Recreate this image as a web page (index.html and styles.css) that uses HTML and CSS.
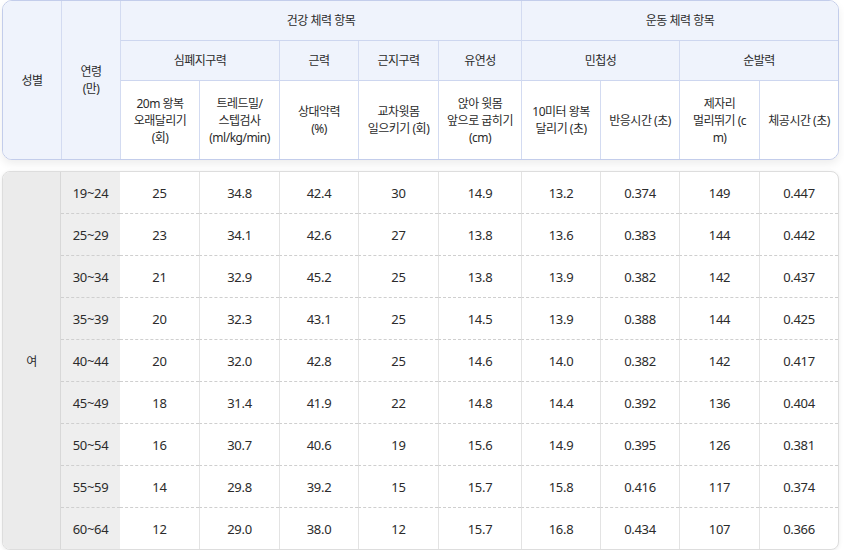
FILE: index.html
```html
<!DOCTYPE html>
<html lang="ko">
<head>
<meta charset="utf-8">
<title>체력 기준표</title>
<link rel="stylesheet" href="styles.css">
</head>
<body>
<div class="wrap">
  <div class="head-box">
    <table class="grid head">
      <colgroup>
        <col class="c1"><col class="c2"><col class="c3"><col class="c4"><col class="c5"><col class="c6"><col class="c7"><col class="c8"><col class="c9"><col class="c10"><col class="c11">
      </colgroup>
      <tr class="r1">
        <th rowspan="3" class="side first">성별</th>
        <th rowspan="3" class="side">연령<br>(만)</th>
        <th colspan="5">건강 체력 항목</th>
        <th colspan="4">운동 체력 항목</th>
      </tr>
      <tr class="r2">
        <th colspan="2">심폐지구력</th>
        <th>근력</th>
        <th>근지구력</th>
        <th>유연성</th>
        <th colspan="2">민첩성</th>
        <th colspan="2">순발력</th>
      </tr>
      <tr class="r3">
        <th>20m 왕복<br>오래달리기<br>(회)</th>
        <th>트레드밀/<br>스텝검사<br>(ml/kg/min)</th>
        <th>상대악력<br>(%)</th>
        <th>교차윗몸<br>일으키기 (회)</th>
        <th>앉아 윗몸<br>앞으로 굽히기<br>(cm)</th>
        <th>10미터 왕복<br>달리기 (초)</th>
        <th>반응시간 (초)</th>
        <th>제자리<br>멀리뛰기 (c<br>m)</th>
        <th>체공시간 (초)</th>
      </tr>
    </table>
  </div>
  <div class="body-box">
    <table class="grid data">
      <colgroup>
        <col class="c1"><col class="c2"><col class="c3"><col class="c4"><col class="c5"><col class="c6"><col class="c7"><col class="c8"><col class="c9"><col class="c10"><col class="c11">
      </colgroup>
      <tr><td rowspan="9" class="sex">여</td><td class="age">19~24</td><td class="d0">25</td><td>34.8</td><td>42.4</td><td>30</td><td>14.9</td><td>13.2</td><td>0.374</td><td>149</td><td>0.447</td></tr>
      <tr><td class="age">25~29</td><td class="d0">23</td><td>34.1</td><td>42.6</td><td>27</td><td>13.8</td><td>13.6</td><td>0.383</td><td>144</td><td>0.442</td></tr>
      <tr><td class="age">30~34</td><td class="d0">21</td><td>32.9</td><td>45.2</td><td>25</td><td>13.8</td><td>13.9</td><td>0.382</td><td>142</td><td>0.437</td></tr>
      <tr><td class="age">35~39</td><td class="d0">20</td><td>32.3</td><td>43.1</td><td>25</td><td>14.5</td><td>13.9</td><td>0.388</td><td>144</td><td>0.425</td></tr>
      <tr><td class="age">40~44</td><td class="d0">20</td><td>32.0</td><td>42.8</td><td>25</td><td>14.6</td><td>14.0</td><td>0.382</td><td>142</td><td>0.417</td></tr>
      <tr><td class="age">45~49</td><td class="d0">18</td><td>31.4</td><td>41.9</td><td>22</td><td>14.8</td><td>14.4</td><td>0.392</td><td>136</td><td>0.404</td></tr>
      <tr><td class="age">50~54</td><td class="d0">16</td><td>30.7</td><td>40.6</td><td>19</td><td>15.6</td><td>14.9</td><td>0.395</td><td>126</td><td>0.381</td></tr>
      <tr><td class="age">55~59</td><td class="d0">14</td><td>29.8</td><td>39.2</td><td>15</td><td>15.7</td><td>15.8</td><td>0.416</td><td>117</td><td>0.374</td></tr>
      <tr class="last"><td class="age">60~64</td><td class="d0">12</td><td>29.0</td><td>38.0</td><td>12</td><td>15.7</td><td>16.8</td><td>0.434</td><td>107</td><td>0.366</td></tr>
    </table>
  </div>
</div>
</body>
</html>
```

FILE: styles.css
```css
* { box-sizing: border-box; }
html, body { margin: 0; padding: 0; background: #ffffff; }
body {
  font-family: "Noto Sans", "Noto Sans CJK KR", sans-serif;
  font-size: 12px;
  letter-spacing: -0.5px;
  color: #2b2b2b;
}
.wrap {
  width: 837px;
  margin-left: 2px;
}
.head-box {
  border: 1px solid #c3cdeb;
  border-radius: 10px;
  overflow: hidden;
  background: #ffffff;
  box-shadow: 0 4px 8px rgba(0, 0, 0, 0.07);
}
.body-box {
  margin-top: 11px;
  border: 1px solid #dddddd;
  border-radius: 8px;
  overflow: hidden;
  background: #ffffff;
  box-shadow: 0 1px 4px rgba(0, 0, 0, 0.08);
}
.grid {
  width: 835px;
  table-layout: fixed;
  border-collapse: separate;
  border-spacing: 0;
}
.c1 { width: 58px; }
.c2 { width: 59px; }
.c3 { width: 79px; }
.c4 { width: 80px; }
.c5 { width: 79px; }
.c6 { width: 80px; }
.c7 { width: 83px; }
.c8 { width: 79px; }
.c9 { width: 79px; }
.c10 { width: 80px; }
.c11 { width: 79px; }

.head th {
  font-weight: 400;
  text-align: center;
  vertical-align: middle;
  padding: 0 2px;
  line-height: 17px;
  color: #2b2b2b;
  border-left: 1px solid #d3dbf1;
}
.head th.first { border-left: none; }
.head .r1 th, .head .r2 th {
  background: #eff3fc;
  border-bottom: 1px solid #cdd6ef;
}
.head .r1 { height: 40px; }
.head .r2 { height: 40px; }
.head .r3 { height: 78px; }
.head .r3 th { background: #ffffff; }
.head th.side {
  background: #eff3fc;
  border-bottom: none;
}

.data td {
  text-align: center;
  vertical-align: middle;
  padding: 0;
  height: 42px;
  font-size: 13px;
  letter-spacing: -0.3px;
  color: #2b2b2b;
  border-left: 1px solid #e3e3e3;
  border-bottom: 1px dashed #cfcfcf;
}
.data tr.last td { border-bottom: none; height: 41px; }
.data td.sex {
  font-size: 12px;
  background: #ebebeb;
  border-left: none;
  border-bottom: none;
  border-right: 1px solid #d8d8d8;
}
.data td.age {
  background: #eeeeee;
  border-left: none;
}
.data td.d0 { border-left: none; }
```
